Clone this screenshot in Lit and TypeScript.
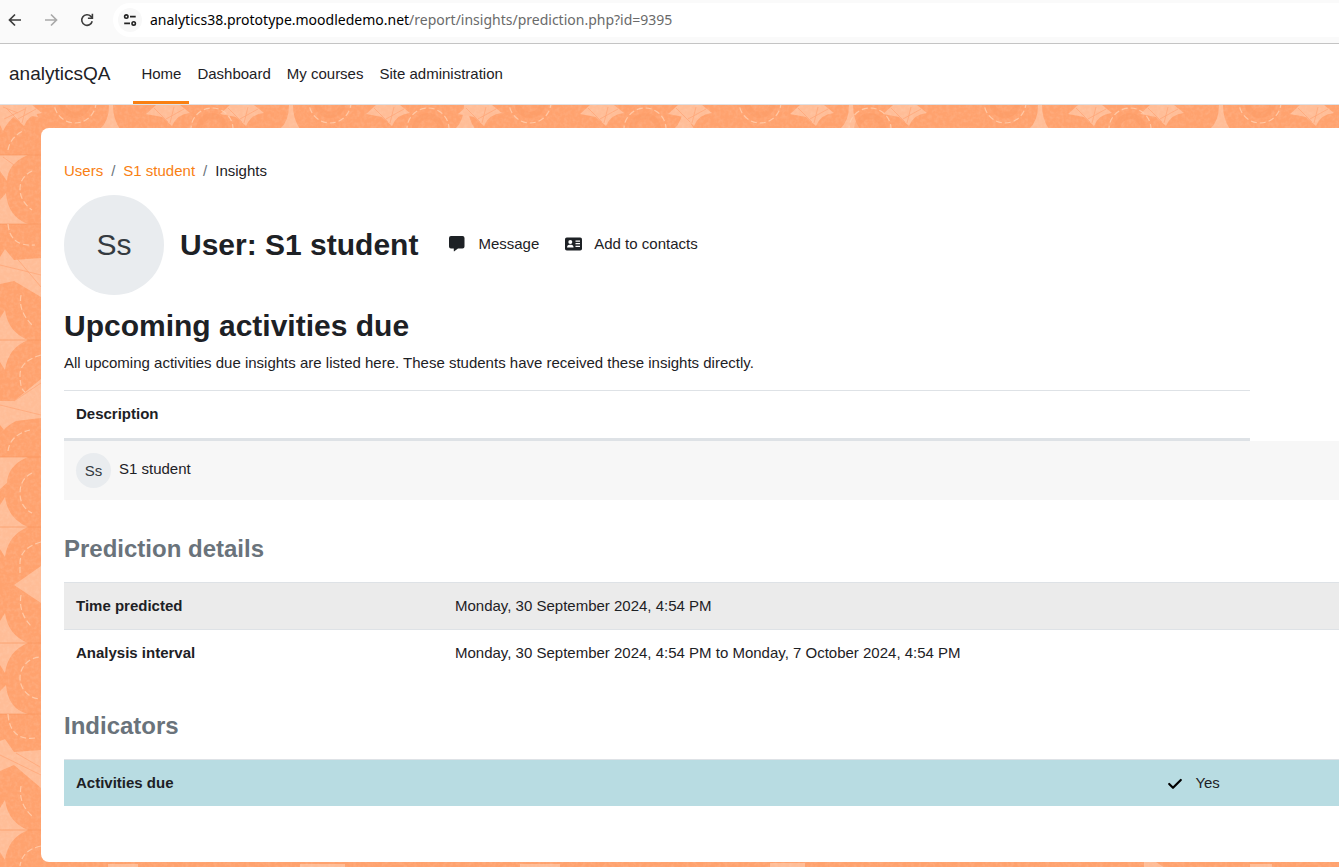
import { LitElement, html, css, svg } from "lit";
import { customElement } from "lit/decorators.js";

/** Decorative mosaic shown behind the page card. */
@customElement("mosaic-backdrop")
class MosaicBackdrop extends LitElement {
  static styles = css`
    :host { display: block; overflow: hidden; background: #ffa26e; }
    svg { display: block; width: 100%; height: 100%; }
    .light { fill: #ffbd97; }
    .seam { stroke: #f9925c; stroke-width: 1; fill: none; opacity: .6; }
    .ring { stroke: #ffcfaf; stroke-width: 1.2; fill: none; stroke-dasharray: 6 3; opacity: .85; }
    .band { stroke: #fc9760; stroke-width: 6; fill: none; opacity: .35; }
    .crack { stroke: #ffa272; stroke-width: .8; fill: none; opacity: .8; }
    .grain { opacity: .13; }
  `;

  render() {
    const diamonds = [235, 422, 538, 725];
    const stars = [20, 168, 242, 388, 480, 602, 690, 812, 905, 1090, 1162, 1312];
    const spikes = [112, 292, 467, 686, 852, 1041, 1222];
    const rings = [75, 212, 330, 428, 530, 645, 760, 870, 1005, 1130, 1260];
    return html`<svg viewBox="0 0 1339 763" preserveAspectRatio="xMinYMin slice" aria-hidden="true">
      <filter id="grain" x="0" y="0" width="100%" height="100%">
        <feTurbulence type="fractalNoise" baseFrequency="0.28" numOctaves="2" seed="4"/>
        <feColorMatrix values="0 0 0 0 1  0 0 0 0 .82  0 0 0 0 .7  2.4 0 0 0 -.95"/>
      </filter>
      <g class="light">
        <path d="M0 0H32L38 12L17 9Q8 16 3 26L0 20Z"/>
        <path d="M0 50H28Q8 58 7 76L0 66Z"/>
        <path d="M0 95L6 88Q8 112 28 119H0Z"/>
        <path d="M0 152L5 144L14 155L41 153V192L14 176L0 179Z"/>
        <path d="M0 296H14L41 274V313L16 316Q8 320 4 325L0 320Z"/>
        <path d="M0 352H28Q8 360 7 378L0 384Z"/>
        <path d="M14 480L41 461V498Z"/>
        <path d="M0 586L6 580Q8 604 28 609H0Z"/>
        <path d="M0 636L5 634L14 647L41 645V683L14 660L0 666Z"/>
        ${diamonds.map((y) => svg`<path d=${`M0 ${y - 22}L5 ${y - 30}Q8 ${y - 8} 28 ${y}Q8 ${y + 8} 5 ${y + 30}L0 ${y + 22}Z`}/>`)}
        ${stars.map((x) => svg`<path d=${`M${x - 12} 0H${x + 12}L${x + 22} 8Q${x + 9} 9 ${x + 4} 21L${x - 6} 12L${x - 22} 9Z`}/>`)}
        ${spikes.map((x) => svg`<path d=${`M${x - 3} 0H${x + 1}Q${x + 1} 14 ${x + 8} 24H${x - 12}Q${x - 3} 16 ${x - 3} 0Z`}/>`)}
        <path d="M108 763V759H138V763ZM300 763V759H345V763ZM520 763V759H560V763ZM770 763V758H805V763ZM1144 763V757H1156L1165 763ZM1250 763V759H1272V763Z"/>
      </g>
      <rect class="grain" width="1339" height="763" filter="url(#grain)"/>
      <g class="crack">
        <path d="M3 2L18 8M4 14L25 4M3 52L14 60M0 160L41 170M14 150L41 182M0 300L41 310M14 296L41 278M0 650L41 670M16 648L40 662"/>
        ${stars.map((x) => svg`<path d=${`M${x - 14} 3L${x} 17M${x + 2} 18L${x + 6} 2M${x - 2} 14L${x + 16} 4`}/>`)}
      </g>
      <g class="seam">
        <path d="M0 50H41M0 119H41M0 235H41M0 352H41M0 422H41M0 538H41M0 609H41M0 725H41"/>
      </g>
      <g class="band">
        ${rings.map((x, i) => svg`<circle cx=${x} cy=${i % 2 ? 24 : -3} r="13"/>`)}
      </g>
      <g class="ring">
        <path d="M8 45Q10 32 25 25"/>
        <path d="M32 66Q20 72 20 84T32 105"/>
        <path d="M8 119Q10 142 35 140"/>
        <path d="M21 190Q18 206 32 220M41 250Q20 256 20 270T25 287"/>
        <path d="M8 346Q10 330 30 325M32 368Q20 374 20 388T32 408"/>
        <path d="M41 437Q20 443 20 458V468M21 490Q18 508 32 522"/>
        <circle cx="41" cy="573" r="21"/>
        <path d="M8 609Q10 636 35 633M21 681Q18 698 32 711M41 741Q22 745 20 761"/>
        ${rings.map((x, i) => svg`<circle cx=${x} cy=${i % 2 ? 24 : -3} r="21"/>`)}
      </g>
    </svg>`;
  }
}

@customElement("app-root")
class AppRoot extends LitElement {
  static styles = css`
    * { box-sizing: border-box; }
    :host {
      display: flex;
      flex-direction: column;
      min-height: 100vh;
      overflow: hidden;
      background: #fff;
      color: #1d2125;
      font: 15px/22px "Liberation Sans", Arial, sans-serif;
    }
    a { color: inherit; text-decoration: none; }
    button { border: 0; padding: 0; background: none; color: inherit; font: inherit; cursor: pointer; }
    h1, h2, h3, p, ol { margin: 0; padding: 0; }
    svg { display: block; }

    .toolbar {
      display: flex;
      align-items: center;
      height: 44px;
      padding: 0 0 4px 7px;
      background: #fafafa;
      border-bottom: 1px solid #c4c4c4;
    }
    .tools { display: flex; gap: 20px; margin-right: 18px; color: #3c3c3c; }
    .tools button:disabled { color: #a9a9a9; }
    .address {
      flex: 1;
      display: flex;
      align-items: center;
      gap: 8px;
      height: 34px;
      padding-left: 5px;
      background: #fff;
      border-radius: 17px 0 0 17px;
      font: 14px/20px "Noto Sans", sans-serif;
      color: #6a6a6a;
      white-space: nowrap;
    }
    .site {
      display: grid;
      place-items: center;
      width: 24px;
      height: 24px;
      border-radius: 12px;
      background: #f8f8f8;
      color: #222;
    }
    .host { color: #000; }

    .navbar {
      display: flex;
      height: 61px;
      padding-left: 9px;
      border-bottom: 1px solid #dee2e6;
      white-space: nowrap;
    }
    .brand { display: flex; align-items: center; margin-right: 23px; font-size: 19px; }
    .menu { display: flex; }
    .menu a {
      display: flex;
      align-items: center;
      padding: 3px 8px 0;
      border-bottom: 3px solid transparent;
    }
    .menu a.active { border-bottom-color: #f98012; }

    .page { position: relative; flex: 1; padding: 23px 0 5px 41px; }
    .backdrop { position: absolute; inset: 0; }
    .card {
      position: relative;
      min-height: 100%;
      padding: 32px 0 20px 23px;
      background: #fff;
      border-radius: 8px 0 0 8px;
    }
    .crumbs { display: flex; list-style: none; }
    .crumbs li + li::before { content: "/"; padding: 0 8px; color: #6a737b; }
    .crumbs a { color: #f98012; }

    .profile { display: flex; align-items: center; margin: 13px 0; }
    .avatar {
      display: grid;
      place-items: center;
      flex: none;
      border-radius: 50%;
      background: #e9ecef;
      color: #343a40;
    }
    .large { width: 100px; height: 100px; margin-right: 16px; font-size: 30px; }
    .small { width: 35px; height: 35px; }
    h1, h2 { font-size: 30px; line-height: 36px; }
    h2 { margin-bottom: 8px; }
    h3 { margin-bottom: 19px; font-size: 24px; line-height: 28px; color: #6a737b; }
    .actions { display: flex; gap: 26px; margin-left: 31px; padding-bottom: 2px; }
    .actions button { display: flex; align-items: center; gap: 12px; }

    table { width: 100%; margin-bottom: 36px; border-spacing: 0; table-layout: fixed; }
    th, td { padding: 12px; border-top: 1px solid #dee2e6; text-align: left; vertical-align: top; }
    .insights { margin: 16px 0 35px; }
    .insights th { height: 51px; border-bottom: 3px solid #dee2e6; }
    .insights td { border-top: 0; background: #f7f7f7; }
    .main { width: 93%; }
    .label { width: 379px; }
    .indicator { width: 85.6%; }
    .person { display: flex; gap: 8px; line-height: 32px; }
    .shaded th, .shaded td { background: #ebebeb; }
    .info th, .info td { background: #b8dce2; }
    .value { display: flex; align-items: center; gap: 12px; }
  `;

  render() {
    return html`
      <header class="toolbar">
        <div class="tools">
          <button aria-label="Back">
            <svg width="16" height="16" viewBox="0 0 16 16" fill="none" stroke="currentColor" stroke-width="1.700"><path d="M14 8H3M8 2.500L2.500 8L8 13.500"/></svg>
          </button>
          <button aria-label="Forward" disabled>
            <svg width="16" height="16" viewBox="0 0 16 16" fill="none" stroke="currentColor" stroke-width="1.700"><path d="M2 8H13M8 2.500L13.500 8L8 13.500"/></svg>
          </button>
          <button aria-label="Reload">
            <svg width="16" height="16" viewBox="0 0 16 16" fill="none" stroke="currentColor" stroke-width="1.600"><path d="M13.200 9.200A5.300 5.300 0 1 1 11.900 4.400L13 5.600"/><path d="M13.400 1.800V6.300H8.900" /></svg>
          </button>
        </div>
        <div class="address">
          <span class="site">
            <svg width="14" height="14" viewBox="0 0 14 14" fill="none" stroke="currentColor" stroke-width="1.600"><circle cx="3.300" cy="3.600" r="1.700"/><path d="M7 3.600H12.700M1.200 10.400H7"/><circle cx="10.700" cy="10.400" r="1.700"/></svg>
          </span>
          <span><span class="host">analytics38.prototype.moodledemo.net</span>/report/insights/prediction.php?id=9395</span>
        </div>
      </header>

      <nav class="navbar">
        <a class="brand" href="#">analyticsQA</a>
        <div class="menu">
          <a class="active" href="#">Home</a>
          <a href="#">Dashboard</a>
          <a href="#">My courses</a>
          <a href="#">Site administration</a>
        </div>
      </nav>

      <div class="page">
        <mosaic-backdrop class="backdrop"></mosaic-backdrop>
        <main class="card">
          <ol class="crumbs">
            <li><a href="#">Users</a></li>
            <li><a href="#">S1 student</a></li>
            <li>Insights</li>
          </ol>

          <div class="profile">
            <span class="avatar large">Ss</span>
            <h1>User: S1 student</h1>
            <div class="actions">
              <button>
                <svg width="17" height="16" viewBox="0 0 17 16" fill="currentColor"><path d="M2 0H13.500Q15.500 0 15.500 2V10.500Q15.500 12.500 13.500 12.500H9L5.300 15.300Q4.800 15.600 4.800 15V12.500H2Q0 12.500 0 10.500V2Q0 0 2 0Z"/></svg>
                Message
              </button>
              <button>
                <svg width="17" height="14" viewBox="0.5 0 17 14"><rect x="0.500" y="0.500" width="17" height="13" rx="1.800" fill="currentColor"/><g fill="#fff"><circle cx="5.800" cy="5" r="2"/><path d="M2.600 10.500Q2.600 7.700 5 7.700H6.600Q9 7.700 9 10.500Z"/><path d="M11 3.500H15.500V4.700H11ZM11 6.100H15.500V7.300H11ZM11 8.700H15.500V9.900H11Z"/></g></svg>
                Add to contacts
              </button>
            </div>
          </div>

          <h2>Upcoming activities due</h2>
          <p>All upcoming activities due insights are listed here. These students have received these insights directly.</p>

          <table class="insights">
            <colgroup><col class="main"><col></colgroup>
            <thead><tr><th scope="col">Description</th></tr></thead>
            <tbody>
              <tr><td colspan="2"><a class="person" href="#"><span class="avatar small">Ss</span>S1 student</a></td></tr>
            </tbody>
          </table>

          <h3>Prediction details</h3>
          <table>
            <colgroup><col class="label"><col></colgroup>
            <tbody>
              <tr class="shaded"><th scope="row">Time predicted</th><td>Monday, 30 September 2024, 4:54 PM</td></tr>
              <tr><th scope="row">Analysis interval</th><td>Monday, 30 September 2024, 4:54 PM to Monday, 7 October 2024, 4:54 PM</td></tr>
            </tbody>
          </table>

          <h3>Indicators</h3>
          <table>
            <colgroup><col class="indicator"><col></colgroup>
            <tbody>
              <tr class="info">
                <th scope="row">Activities due</th>
                <td><span class="value"><svg width="16" height="16" viewBox="0 0 16 16" fill="none" stroke="#000" stroke-width="2.200" stroke-linecap="round" stroke-linejoin="round"><path d="M2.200 9L6 12.800L13.800 5"/></svg>Yes</span></td>
              </tr>
            </tbody>
          </table>
        </main>
      </div>
    `;
  }
}
